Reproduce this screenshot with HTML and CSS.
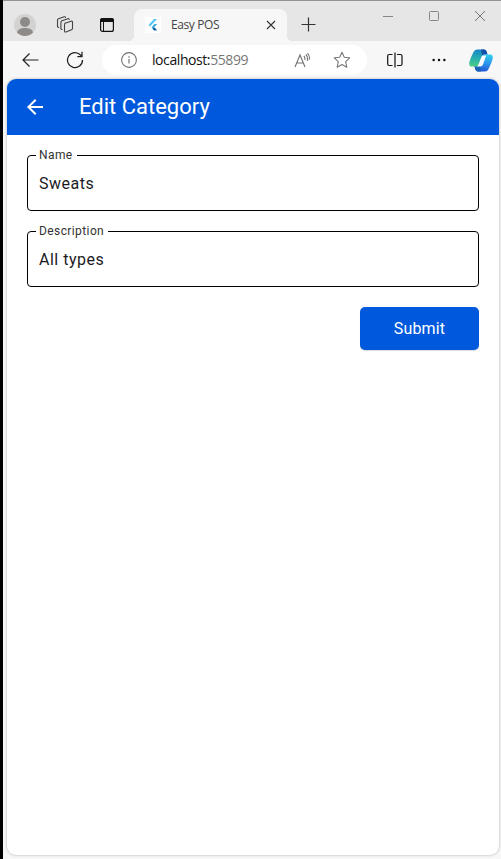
FILE: index.html
```
<!DOCTYPE html>
<html lang="en">
<head>
<meta charset="utf-8">
<title>Easy POS</title>
<link rel="stylesheet" href="styles.css">
</head>
<body>
<div class="window">
  <header class="tabbar">
    <svg class="profile" width="22" height="22" viewBox="0 0 22 22"><circle cx="11" cy="11" r="11" fill="#d4d2d0"/><circle cx="11" cy="8" r="5" fill="#8d8a88"/><path d="M3 18.5C4 15 7 14 11 14s7 1 8 4.500A11 11 0 0 1 3 18.500Z" fill="#8d8a88"/></svg>
    <svg class="workspaces" width="18" height="18" viewBox="0 0 18 18" fill="none" stroke="#444" stroke-width="1.100" stroke-linejoin="round" stroke-linecap="round"><path d="M9 7.300 15 5.200Q16.500 4.800 16.500 6.200V12.300Q16.500 13.400 15.500 13.800L10 15.900Q8.500 16.400 8.500 15V8.500Q8.500 7.500 9.500 7.100M6 13.500 4.900 13V6.300Q4.900 5.200 5.900 4.800L11.800 2.700Q13 2.400 13.200 3.400M2.700 11.500 1.500 10.800V4.200Q1.500 3.100 2.500 2.700L8.200.8Q9.300.5 9.500 1.500"/></svg>
    <svg class="tab-actions" width="14" height="14" viewBox="0 0 14 14"><rect x=".6" y=".6" width="12.800" height="12.800" rx="2" fill="none" stroke="#111" stroke-width="1.200"/><path d="M0 2.500Q0 0 2.500 0h9Q14 0 14 2.500V4H0Z" fill="#111"/><path d="M3.500 4v9.500" stroke="#111"/></svg>
    <div class="tab">
      <span class="favicon"><svg width="12" height="14" viewBox="0 0 12 14"><path d="M7 1h3L3 8.500 1.500 7Z" fill="#55c5f8"/><path d="M7.500 6h2.700L7 9.300 10 12.300H7L4.500 9.500Z" fill="#31a9e1"/><path d="m5.800 11 1.500-1.500 2.700 2.800H7Z" fill="#075293"/></svg></span>
      <span class="tab-title">Easy POS</span>
      <svg class="tab-close" width="10" height="10" viewBox="0 0 10 10"><path d="m1 1 8 8M9 1 1 9" stroke="#333" stroke-width="1.100"/></svg>
    </div>
    <svg class="new-tab" width="15" height="15" viewBox="0 0 15 15"><path d="M7.500.500v14M.500 7.500h14" stroke="#333" stroke-width="1.200"/></svg>
    <div class="controls">
      <svg width="10" height="10" viewBox="0 0 10 10"><path d="M0 5.500h10" stroke="#858585"/></svg>
      <svg width="10" height="10" viewBox="0 0 10 10"><rect x=".5" y=".5" width="9" height="9" rx="1" fill="none" stroke="#858585"/></svg>
      <svg width="10" height="10" viewBox="0 0 10 10"><path d="m0 0 10 10m0-10L0 10" stroke="#777"/></svg>
    </div>
  </header>
  <nav class="toolbar">
    <svg class="back" width="17" height="14" viewBox="0 0 17 14" fill="none" stroke="#222" stroke-width="1.200"><path d="M16.500 7H1M7.500.500 1 7l6.500 6.500"/></svg>
    <svg class="reload" width="18" height="18" viewBox="0 0 18 18" fill="none" stroke="#222" stroke-width="1.250"><path d="M16.500 9A7.500 7.500 0 1 1 14.500 4L16 5.500M16 .8v4.700h-4.700"/></svg>
    <div class="address">
      <svg class="info" width="16" height="16" viewBox="0 0 16 16"><circle cx="8" cy="8" r="7.400" fill="none" stroke="#737373" stroke-width="1.100"/><path d="M8 7v4.500M8 4.300v1.400" stroke="#737373" stroke-width="1.200"/></svg>
      <span class="url">localhost:<span class="port">55899</span></span>
      <svg class="read" width="17" height="15" viewBox="0 0 17 15" fill="none" stroke="#707070" stroke-width="1.100"><path d="m1 14 5-12 5 12M2.700 10h6.600M9.800 3q1.500 1.500 1 4M11.800 1.500q2.500 2.500 1.600 6.500M13.500.200q2.500 2.800 1.900 6.300"/></svg>
      <svg class="star" width="18" height="18" viewBox="0 0 18 18"><path d="m9 1.200 2.300 5 5.400.6-4 3.800 1.100 5.600L9 13.500l-4.800 2.700 1.100-5.600-4-3.800 5.400-.6Z" fill="none" stroke="#777" stroke-width="1.100" stroke-linejoin="round"/></svg>
    </div>
    <svg class="split" width="16" height="16" viewBox="0 0 16 16" fill="none" stroke="#111" stroke-width="1.200"><path d="M5.500 2.500H2Q.700 2.500.700 4v8Q.700 13.500 2 13.500h3.500M10 2.500h3.500q1.500 0 1.500 1.500v8q0 1.500-1.500 1.500H10M8 .5v15"/></svg>
    <svg class="more" width="14" height="4" viewBox="0 0 14 4" fill="#111"><circle cx="1.600" cy="2" r="1.250"/><circle cx="7" cy="2" r="1.250"/><circle cx="12.400" cy="2" r="1.250"/></svg>
    <svg class="copilot" width="24" height="23" viewBox="0 0 24 23">
      <defs>
        <linearGradient id="left" x1=".3" y1="0" x2=".2" y2="1"><stop stop-color="#1685c4"/><stop offset=".5" stop-color="#28afb0"/><stop offset="1" stop-color="#4bcf80"/></linearGradient>
        <linearGradient id="right" x1=".6" y1="0" x2=".4" y2="1"><stop stop-color="#30ccec"/><stop offset=".4" stop-color="#2d9eed"/><stop offset="1" stop-color="#2057d6"/></linearGradient>
      </defs>
      <path d="M4.500 3Q5.500.5 8 .5h7q2 0 2.600 2l.9 3h-3q-2 0-2.700 2L9.500 17.500H3Q-.3 17.500.3 13.500 1 10 4.500 3Z" fill="url(#left)"/>
      <path d="M12 .5h3q2 0 2.600 2l.9 3h-3q-1.500 0-2.200 1Z" fill="#174ea7"/>
      <path d="M19.500 20Q18.500 22.500 16 22.500H9q-2 0-2.600-2l-.9-3h3q2 0 2.700-2L14.500 5.500H21q3.300 0 2.700 4Q23 13 19.500 20Z" fill="url(#right)"/>
      <path d="M12 22.500H9q-2 0-2.600-2l-.9-3h3q1.500 0 2.200-1Z" fill="#1763b5"/>
      <path d="M15 6.500h2.200L14 15.500q-.7 2-2.700 2H7.500q1.500-.3 2-2l2.700-7q.7-2 2.800-2Z" fill="#f5fbff"/>
    </svg>
  </nav>
  <main class="page">
    <header class="appbar">
      <svg width="16" height="16" viewBox="0 0 16 16"><path d="M16 7H3.830l5.590-5.590L8 0 0 8l8 8 1.410-1.410L3.830 9H16Z" fill="#fff"/></svg>
      <h1>Edit Category</h1>
    </header>
    <form class="form">
      <fieldset><legend class="name-label">Name</legend><span>Sweats</span></fieldset>
      <fieldset><legend class="description-label">Description</legend><span>All types</span></fieldset>
      <button type="button">Submit</button>
    </form>
  </main>
</div>
</body>
</html>
```
FILE: styles.css
```
* { box-sizing: border-box; }
body { margin: 0; background: #000; font-family: Roboto, sans-serif; }
svg { display: block; flex: none; }
.window { height: 859px; margin-left: 3px; background: #f7f7f7; border-top: 1px solid #929292; overflow: hidden; }
.tabbar { display: flex; height: 40px; padding: 8px 0 0 11px; background: #e6e6e6; }
.profile { margin-top: 5px; }
.workspaces { margin: 7px 0 0 20px; }
.tab-actions { margin: 9px 0 0 26px; }
.tab { position: relative; display: flex; align-items: center; width: 153px; height: 32px; margin-left: 20px; padding-left: 11px; background: #f7f7f7; border-radius: 8px 8px 0 0; }
.tab::before, .tab::after { content: ""; position: absolute; bottom: 0; width: 6px; height: 6px; }
.tab::before { left: -6px; background: radial-gradient(circle at 0 0, transparent 6px, #f7f7f7 6.500px); }
.tab::after { right: -6px; background: radial-gradient(circle at 100% 0, transparent 6px, #f7f7f7 6.500px); }
.favicon { display: flex; align-items: center; justify-content: center; width: 16px; height: 16px; background: #fff; }
.tab-title { width: 95px; margin-left: 10px; font: 12px/16px "Open Sans", sans-serif; letter-spacing: -.4px; color: #444; }
.new-tab { margin: 8px 0 0 14px; }
.controls { display: flex; gap: 36px; margin: 2px 0 0 67px; }
.toolbar { display: flex; align-items: center; height: 38px; padding-left: 19px; }
.reload { margin-left: 27px; }
.address { display: flex; align-items: center; width: 265px; height: 30px; margin-left: 18px; padding-left: 19px; background: #fff; border-radius: 15px; }
.url { width: 128px; margin-left: 15px; font: 14px/20px "Open Sans", sans-serif; letter-spacing: -.42px; color: #111; }
.port { color: #777; }
.read { margin-left: 14px; }
.star { margin-left: 22px; }
.split { margin-left: 20px; }
.more { margin-left: 29px; }
.copilot { margin-left: 23px; }
.page { width: 492px; height: 776px; margin-left: 4px; background: #fff; border-radius: 9px; overflow: hidden; box-shadow: 0 0 3px rgba(0,0,0,.28); }
.appbar { display: flex; align-items: center; height: 56px; padding-left: 20px; background: #0058dc; color: #fff; }
.appbar h1 { margin: 0 0 0 36px; font-size: 22px; line-height: 28px; font-weight: 400; }
.form { display: flex; flex-direction: column; padding: 13px 20px 0; }
fieldset { height: 63px; min-width: 0; margin: 0 0 13px; padding: 0 11px 0 8px; border: 1px solid #000; border-radius: 4px; }
legend { height: 14px; padding: 0 0 0 3px; font-size: 12px; line-height: 14px; letter-spacing: .4px; color: #333; }
.name-label { width: 41px; }
.description-label { width: 72px; }
fieldset span { display: block; padding: 10px 0 0 3px; font-size: 16px; line-height: 24px; letter-spacing: .5px; color: #1b1b1f; }
button { align-self: flex-end; width: 119px; height: 43px; margin-top: 7px; padding: 0; border: 0; border-radius: 5px; background: #0058dc; color: #fff; font: 400 16px/24px Roboto, sans-serif; letter-spacing: .15px; box-shadow: 0 1px 1px rgba(0,0,0,.15); }
```
